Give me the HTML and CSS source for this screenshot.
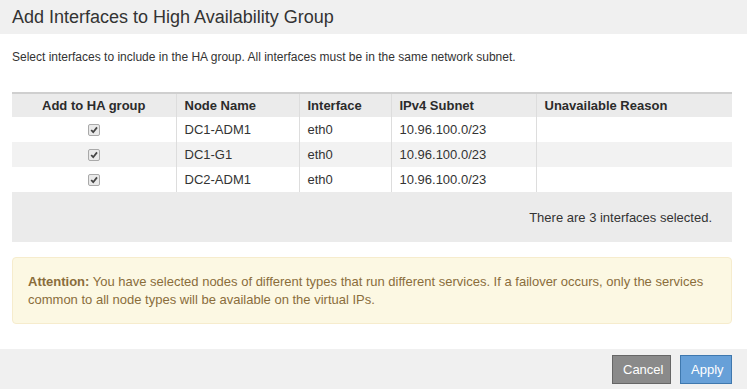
FILE: index.html
```html
<!DOCTYPE html>
<html lang="en">
<head>
    <meta charset="UTF-8">
    <title>Add Interfaces to High Availability Group</title>
    <link rel="stylesheet" href="styles.css">
</head>
<body>
    <div class="modal">
        <div class="modal-header">
            <h1>Add Interfaces to High Availability Group</h1>
        </div>
        <div class="modal-body">
            <p class="intro">Select interfaces to include in the HA group. All interfaces must be in the same network subnet.</p>
            <table class="grid">
                <colgroup>
                    <col style="width: 164px">
                    <col style="width: 123px">
                    <col style="width: 92px">
                    <col style="width: 145px">
                    <col>
                </colgroup>
                <thead>
                    <tr>
                        <th class="center">Add to HA group</th>
                        <th>Node Name</th>
                        <th>Interface</th>
                        <th>IPv4 Subnet</th>
                        <th>Unavailable Reason</th>
                    </tr>
                </thead>
                <tbody>
                    <tr>
                        <td class="center"><input type="checkbox" class="check" checked></td>
                        <td>DC1-ADM1</td>
                        <td>eth0</td>
                        <td>10.96.100.0/23</td>
                        <td></td>
                    </tr>
                    <tr class="odd">
                        <td class="center"><input type="checkbox" class="check" checked></td>
                        <td>DC1-G1</td>
                        <td>eth0</td>
                        <td>10.96.100.0/23</td>
                        <td></td>
                    </tr>
                    <tr>
                        <td class="center"><input type="checkbox" class="check" checked></td>
                        <td>DC2-ADM1</td>
                        <td>eth0</td>
                        <td>10.96.100.0/23</td>
                        <td></td>
                    </tr>
                </tbody>
                <tfoot>
                    <tr>
                        <td colspan="5">There are 3 interfaces selected.</td>
                    </tr>
                </tfoot>
            </table>
            <div class="alert">
                <span class="label">Attention:</span>
                <span>You have selected nodes of different types that run different services. If a failover occurs, only the services common to all node types will be available on the virtual IPs.</span>
            </div>
        </div>
        <div class="modal-footer">
            <button class="btn btn-cancel">Cancel</button>
            <button class="btn btn-apply">Apply</button>
        </div>
    </div>
</body>
</html>
```

FILE: styles.css
```css
/* Boîte de dialogue HA */
body {
    margin: 0;
    background-color: #ffffff;
    font-family: 'Liberation Sans', Arial, sans-serif;
    color: #333333;
}

.modal {
    width: 747px;
}

.modal-header {
    background-color: #f0f0f0;
    height: 34px;
    padding: 0 12px;
    display: flex;
    align-items: center;
}

h1 {
    margin: 0;
    font-size: 18px;
    font-weight: normal;
    color: #333333;
}

.modal-body {
    padding: 15px 15px 25px 12px;
}

.intro {
    margin: 0 0 27px 0;
    font-size: 12px;
    line-height: 16px;
}

.grid {
    width: 720px;
    border-collapse: collapse;
    table-layout: fixed;
    font-size: 13px;
}

.grid th {
    background-color: #ebebeb;
    border-top: 2px solid #cfcfcf;
    height: 23px;
    text-align: left;
    padding: 0 8px;
    font-weight: bold;
    color: #2b2b2b;
}

.grid td {
    height: 25px;
    padding: 0 8px;
}

.grid th + th,
.grid td + td {
    border-left: 1px solid #dddddd;
}

.grid .center {
    text-align: center;
}

.grid tr.odd td {
    background-color: #f2f2f2;
}

.grid tfoot td {
    background-color: #ebebeb;
    height: 50px;
    text-align: right;
    padding-right: 20px;
}

.check {
    appearance: none;
    -webkit-appearance: none;
    width: 12px;
    height: 12px;
    margin: 0;
    vertical-align: -2px;
    border: 1px solid #a9a9a9;
    border-radius: 2px;
    background-color: #e9e9e9;
    background-image: url('data:image/svg+xml;charset=UTF-8,%3csvg xmlns=%27http://www.w3.org/2000/svg%27 viewBox=%270 0 10 10%27%3e%3cpath d=%27M2.2 5 L4.2 7.2 L8 2.4%27 fill=%27none%27 stroke=%27%23444444%27 stroke-width=%271.8%27/%3e%3c/svg%3e');
    background-repeat: no-repeat;
    background-size: 10px;
}

.alert {
    margin-top: 15px;
    padding: 15px 15px 14px 15px;
    background-color: #fcf8e3;
    border: 1px solid #f6eccd;
    border-radius: 4px;
    color: #8a6d3b;
    font-size: 13px;
    line-height: 18px;
}

.alert .label {
    font-weight: bold;
}

.modal-footer {
    background-color: #f0f0f0;
    height: 40px;
    padding: 0 15px;
    display: flex;
    justify-content: flex-end;
    align-items: center;
    gap: 9px;
}

.btn {
    height: 29px;
    padding: 0 10px;
    font-family: 'Liberation Sans', Arial, sans-serif;
    font-size: 13px;
    color: #ffffff;
    border-radius: 0;
    cursor: pointer;
}

.btn-cancel {
    background-color: #8a8a8a;
    border: 1px solid #666666;
    width: 59px;
}

.btn-apply {
    background-color: #67a0d8;
    border: 1px solid #3f78ae;
    width: 52px;
}
```
